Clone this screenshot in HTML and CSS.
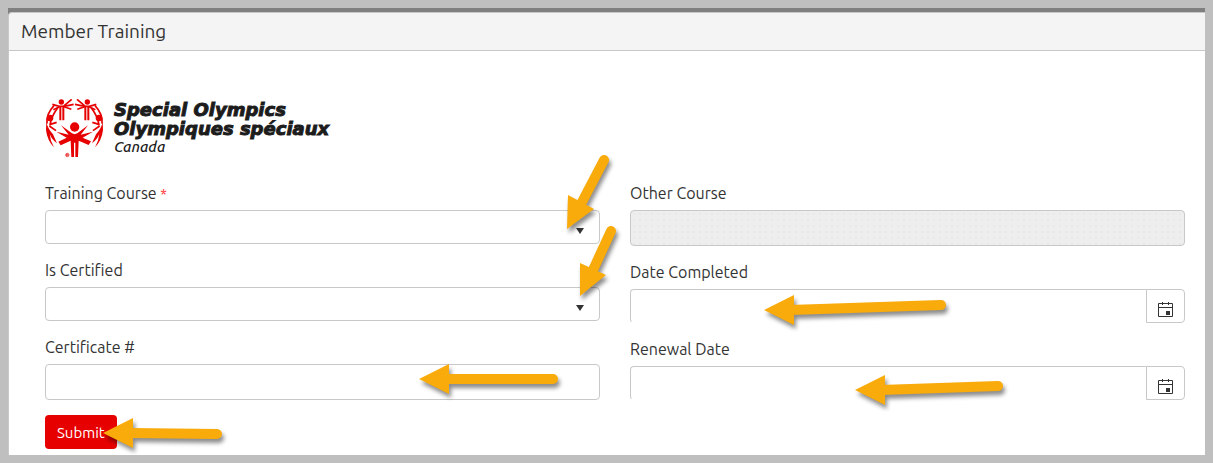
FILE: index.html
```html
<!DOCTYPE html>
<html lang="en">
<head>
    <meta charset="UTF-8">
    <meta name="viewport" content="width=device-width, initial-scale=1.0">
    <title>Member Training</title>
    <link rel="stylesheet" href="styles.css">
</head>
<body>
    <main class="panel">
        <h1 class="panel-title">Member Training</h1>
        <form class="panel-body">
            <div class="logo">
                <svg class="logo-mark" viewBox="27 27 177 177" aria-hidden="true">
                    <g fill="#e60000">
                        <circle cx="116" cy="111" r="14"/>
                        <circle cx="76" cy="36" r="8"/>
                        <circle cx="154" cy="36" r="8"/>
                        <circle cx="42" cy="84" r="10"/>
                        <circle cx="189" cy="84" r="10"/>
                        <!-- front figure -->
                        <path d="M75 106 L108 130 Q116 135 124 130 L156 106 L134 134 L171 125 L140 143 L165 154 L158 165 L128 152 L126 201 H118 V158 H114 V201 H106 L104 152 L74 166 L67 155 L92 143 L61 125 L98 134 Z"/>
                        <!-- side figures, curved round the rim -->
                        <path d="M31 96 Q35 116 51 133 L63 160 Q47 148 41 132 Q43 154 54 172 Q34 152 30 120 Z"/>
                        <path d="M200 96 Q196 116 180 133 L168 160 Q184 148 190 132 Q188 154 177 172 Q197 152 201 120 Z"/>
                    </g>
                    <g fill="none" stroke="#e60000" stroke-width="5">
                        <!-- back figures -->
                        <path d="M49 43 L70 49 H84 L113 43 M52 59 L74 49 M82 49 L107 28 M84 50 L106 58"/>
                        <path d="M181 43 L160 49 H146 L117 43 M178 59 L156 49 M148 49 L123 28 M146 50 L124 58"/>
                        <path d="M73 49 V91 M82 49 V91 M148 49 V91 M157 49 V91" stroke-width="6"/>
                        <!-- side arms -->
                        <path d="M33 101 Q30 72 54 47 M42 106 Q46 78 65 54 M40 104 L62 97 M40 108 L60 122"/>
                        <path d="M198 101 Q201 72 177 47 M189 106 Q185 78 166 54 M191 104 L169 97 M191 108 L171 122"/>
                    </g>
                    <g fill="none" stroke="#e60000" stroke-width="2">
                        <circle cx="94" cy="195" r="5"/>
                        <path d="M92 198 V192 H95 Q98 194 95 195 H92 M95 195 L97 198"/>
                    </g>
                </svg>
                <div class="logo-text">
                    <span class="logo-name">Special Olympics</span>
                    <span class="logo-name">Olympiques spéciaux</span>
                    <span class="logo-country">Canada</span>
                </div>
            </div>

            <div class="columns">
                <div class="column">
                    <div class="field">
                        <label for="course">Training Course <span class="required">*</span></label>
                        <div class="control select-box">
                            <select id="course" name="course" required>
                                <option value=""></option>
                            </select>
                            <svg class="arrow arrow-course" width="50" height="85" viewBox="0 0 50 85" aria-hidden="true">
                                <path class="shaft" d="M43 12 L20 56"/>
                                <path class="head" d="M6 81 L7 47 L33 61 Z"/>
                            </svg>
                        </div>
                    </div>
                    <div class="field">
                        <label for="certified">Is Certified</label>
                        <div class="control select-box">
                            <select id="certified" name="certified">
                                <option value=""></option>
                            </select>
                            <svg class="arrow arrow-certified" width="50" height="85" viewBox="0 0 50 85" aria-hidden="true">
                                <path class="shaft" d="M37 16 L19 55"/>
                                <path class="head" d="M6 81 L6 48 L32 60 Z"/>
                            </svg>
                        </div>
                    </div>
                    <div class="field">
                        <label for="certificate">Certificate #</label>
                        <div class="control">
                            <input class="text-input" type="text" id="certificate" name="certificate">
                            <svg class="arrow arrow-certificate" width="150" height="40" viewBox="0 0 150 40" aria-hidden="true">
                                <path class="shaft" d="M138 20 L30 20"/>
                                <path class="head" d="M4 20 L34 5 L34 35 Z"/>
                            </svg>
                        </div>
                    </div>
                    <div class="actions">
                        <button class="btn-submit" type="submit">Submit</button>
                        <svg class="arrow arrow-submit" width="130" height="40" viewBox="0 0 130 40" aria-hidden="true">
                            <path class="shaft" d="M118 21 L30 20"/>
                            <path class="head" d="M4 20 L34 5 L34 35 Z"/>
                        </svg>
                    </div>
                </div>

                <div class="column">
                    <div class="field">
                        <label for="other">Other Course</label>
                        <div class="control">
                            <input class="text-input" type="text" id="other" name="other" disabled>
                        </div>
                    </div>
                    <div class="field">
                        <label for="completed">Date Completed</label>
                        <div class="control date-box">
                            <input type="text" id="completed" name="completed">
                            <button type="button" class="btn-date" aria-label="Pick date completed">
                                <svg width="15" height="15" viewBox="0 0 15 15" aria-hidden="true">
                                    <path d="M.5 1.5h14v13H.5zM.5 5.5h14M4.5 0v3M10.5 0v3" fill="none" stroke="#333"/>
                                    <path d="M8 9h4v4H8z" fill="#333"/>
                                </svg>
                            </button>
                            <svg class="arrow arrow-completed" width="195" height="40" viewBox="0 0 195 40" aria-hidden="true">
                                <path class="shaft" d="M181 15 L30 20"/>
                                <path class="head" d="M4 20 L34 5 L34 35 Z"/>
                            </svg>
                        </div>
                    </div>
                    <div class="field">
                        <label for="renewal">Renewal Date</label>
                        <div class="control date-box">
                            <input type="text" id="renewal" name="renewal">
                            <button type="button" class="btn-date" aria-label="Pick renewal date">
                                <svg width="15" height="15" viewBox="0 0 15 15" aria-hidden="true">
                                    <path d="M.5 1.5h14v13H.5zM.5 5.5h14M4.5 0v3M10.5 0v3" fill="none" stroke="#333"/>
                                    <path d="M8 9h4v4H8z" fill="#333"/>
                                </svg>
                            </button>
                            <svg class="arrow arrow-renewal" width="160" height="40" viewBox="0 0 160 40" aria-hidden="true">
                                <path class="shaft" d="M147 16 L30 20"/>
                                <path class="head" d="M4 20 L34 5 L34 35 Z"/>
                            </svg>
                        </div>
                    </div>
                </div>
            </div>
        </form>
    </main>
</body>
</html>
```
FILE: styles.css
```css
*{
    box-sizing: border-box;
}
body{
    margin: 0px;
    padding: 8px;
    background-color: #bfbfbf;
    color: #333;
    font-family: Ubuntu, "Noto Sans", sans-serif;
    font-size: 16px;
}
.panel{
    min-height: calc(100vh - 16px);
    padding-top: 4px;
    background-color: #7f7f7f;
    display: flex;
    flex-direction: column;
}
.panel-title{
    margin: 0px;
    padding: 0px 12px;
    border: 1px solid #c8c8c8;
    border-right: 0px;
    border-radius: 4px 0px 0px 0px;
    background-color: #f4f4f4;
    font-size: 19px;
    font-weight: normal;
    line-height: 37px;
}
.panel-body{
    flex: 1;
    padding: 48px 20px 6px 36px;
    border-left: 1px solid #c8c8c8;
    background-color: #fff;
}
.logo{
    display: flex;
    gap: 10px;
    height: 59px;
    margin-bottom: 23px;
}
.logo-mark{
    width: 59px;
    height: 59px;
}
.logo-text{
    display: flex;
    flex-direction: column;
    padding-top: 1px;
    color: #1c1c1c;
    font-style: italic;
    white-space: nowrap;
}
.logo-name{
    font-family: "DejaVu Sans", sans-serif;
    font-size: 18px;
    font-weight: bold;
    line-height: 19px;
    -webkit-text-stroke: 1px #1c1c1c;
}
.logo-country{
    font-size: 15px;
    font-weight: 500;
    line-height: 18px;
}
.columns{
    display: grid;
    grid-template-columns: 1fr 1fr;
    gap: 30px;
}
.column{
    display: flex;
    flex-direction: column;
    gap: 14px;
}
.field label{
    display: block;
    margin-bottom: 5px;
    line-height: 24px;
}
.required{
    color: #f33;
    font-size: 14px;
    line-height: 1;
}
.control{
    position: relative;
}
select,
input{
    display: block;
    width: 100%;
    height: 34px;
    padding: 6px 8px;
    border: 1px solid #c8c8c8;
    border-radius: 4px;
    background-color: #fff;
    color: #333;
    font: inherit;
}
select{
    appearance: none;
}
.text-input{
    height: 36px;
}
.text-input:disabled{
    background-color: #eee;
    background-image: radial-gradient(circle, #e8e8e8 1px, transparent 1px);
    background-size: 6px 6px;
}
.select-box::after{
    content: "";
    position: absolute;
    right: 16px;
    top: 18px;
    border: 4px solid transparent;
    border-top: 6px solid #333;
    border-bottom: 0px;
    pointer-events: none;
}
.date-box{
    display: flex;
}
.date-box input{
    flex: 1;
    border-right: 0px;
    border-bottom-color: transparent;
    border-radius: 4px 0px 0px 4px;
}
.btn-date{
    display: flex;
    justify-content: center;
    align-items: center;
    width: 39px;
    height: 34px;
    padding: 6px 0px 0px;
    border: 1px solid #c8c8c8;
    border-radius: 0px 4px 4px 0px;
    background-color: #fff;
}
.actions{
    position: relative;
    padding-top: 1px;
}
.btn-submit{
    height: 34px;
    padding: 0px 12px;
    border: 0px;
    border-radius: 4px;
    background-color: #e60000;
    color: #fff;
    font: inherit;
    font-size: 15px;
}

/* callout arrows lying over the form */
.arrow{
    position: absolute;
    overflow: visible;
    pointer-events: none;
    z-index: 1;
    filter: drop-shadow(2px 4px 2px rgba(0, 0, 0, 0.45));
}
.shaft{
    fill: none;
    stroke: #f8ab0a;
    stroke-width: 10px;
    stroke-linecap: round;
}
.head{
    fill: #f8ab0a;
}
.arrow-course{
    right: -11px;
    top: -62px;
}
.arrow-certified{
    right: -24px;
    top: -72px;
}
.arrow-certificate{
    right: 35px;
    top: -5px;
}
.arrow-submit{
    left: 54px;
    top: -1px;
}
.arrow-completed{
    right: 230px;
    top: 1px;
}
.arrow-renewal{
    right: 174px;
    top: 4px;
}
```
